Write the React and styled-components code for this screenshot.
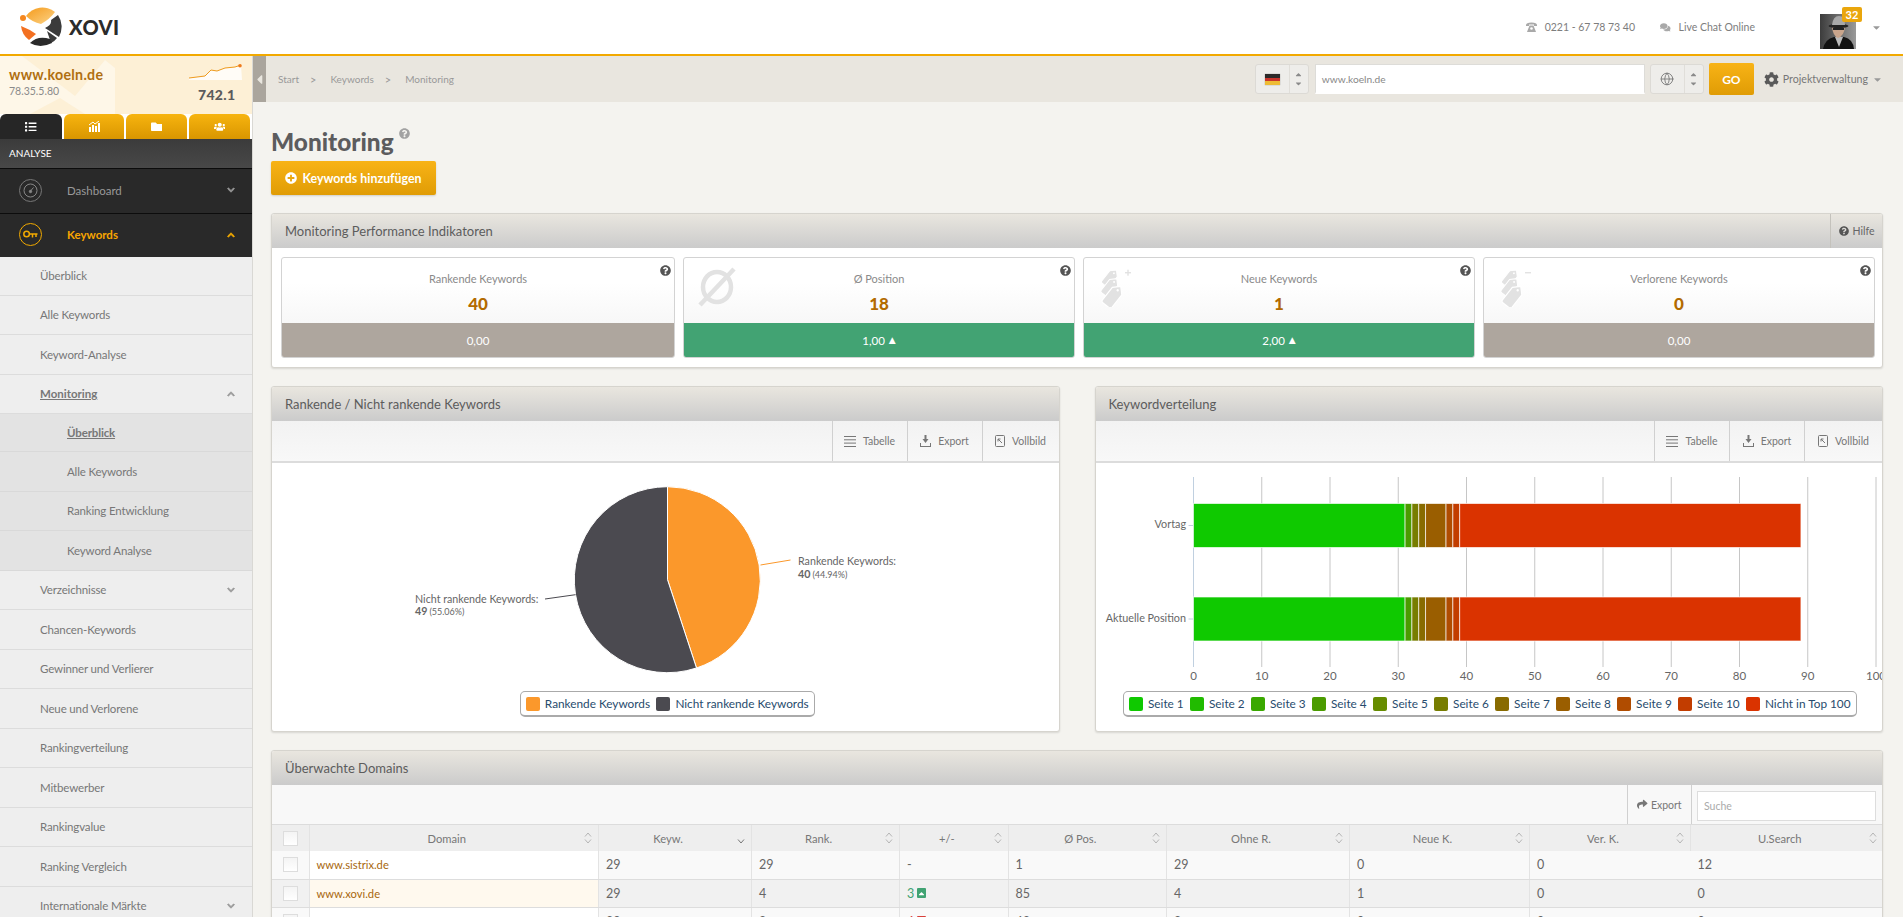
import React from "react";
import styled, { createGlobalStyle } from "styled-components";
import {
  FaList, FaFolder, FaUsers, FaChevronDown, FaChevronUp, FaQuestionCircle, FaPlusCircle,
  FaCog, FaComments, FaShare, FaCaretDown, FaCaretUp, FaCaretLeft,
} from "react-icons/fa";
import { Globe } from "lucide-react";

const FONT = `"Lato", "Noto Sans", "Liberation Sans", sans-serif`;

const Global = createGlobalStyle`
  html, body { margin: 0; padding: 0; height: 100%; overflow: hidden; }
  body { font-family: ${FONT}; background: #f4f3ef; color: #666; }
  * { box-sizing: border-box; }
`;

const Page = styled.div`
  width: 100%;
  height: 100vh;
  overflow: hidden;
  display: flex;
  flex-direction: column;
`;

/* ---------- header ---------- */
const Header = styled.header`
  flex: 0 0 56px;
  display: flex;
  align-items: center;
  background: #fff;
  border-bottom: 2px solid #f2a900;
  padding: 0 21px 0 20px;
`;
const Brand = styled.div`
  display: flex;
  align-items: center;
  gap: 7px;
`;
const BrandName = styled.span`
  font-weight: 900;
  font-size: 20px;
  letter-spacing: 0.4px;
  color: #2b2b2b;
`;
const HeaderRight = styled.div`
  margin-left: auto;
  display: flex;
  align-items: center;
  height: 100%;
`;
const Contact = styled.span`
  display: inline-flex;
  align-items: center;
  gap: 8px;
  font-size: 10.5px;
  color: #7d7d7d;
  margin-right: ${(p) => p.$mr}px;
  svg { color: #a9a9a9; }
`;
const AvatarBox = styled.div`
  position: relative;
  width: 36px;
  height: 35px;
  margin-top: 8px;
  margin-right: 15px;
`;
const Badge = styled.span`
  position: absolute;
  top: -7px;
  right: -6px;
  width: 20px;
  height: 15px;
  border-radius: 2px;
  background: #eaa60c;
  color: #fff;
  font-size: 11px;
  font-weight: 700;
  line-height: 15px;
  text-align: center;
`;
const Caret = styled.span`
  display: inline-flex;
  color: #9a9a9a;
  font-size: 11px;
`;

/* ---------- body ---------- */
const Body = styled.div`
  flex: 1;
  display: flex;
  min-height: 0;
`;
const Sidebar = styled.aside`
  flex: 0 0 253px;
  border-right: 1px solid #d9d8d4;
  background: #eee;
  overflow: hidden;
`;
const Site = styled.div`
  position: relative;
  height: 58px;
  background: #fdf0d6;
  overflow: hidden;
`;
const SiteArt = styled.svg`
  position: absolute;
  left: 0;
  top: 0;
`;
const SiteName = styled.div`
  position: absolute;
  left: 9px;
  top: 10px;
  font-size: 14.2px;
  font-weight: 700;
  letter-spacing: 0.3px;
  color: #b06f10;
`;
const SiteIp = styled.div`
  position: absolute;
  left: 9px;
  top: 29px;
  font-size: 10.5px;
  color: #8a8a8a;
`;
const SiteScore = styled.div`
  position: absolute;
  left: 198px;
  top: 30px;
  font-size: 14px;
  font-weight: 900;
  letter-spacing: 0.3px;
  color: #5b5b5b;
`;
const Spark = styled.svg`
  position: absolute;
  left: 189px;
  top: 8px;
`;
const Tabs = styled.div`
  height: 25px;
  display: grid;
  grid-template-columns: 62px 60px 61px 61px;
  column-gap: 2px;
  background: #fff;
`;
const Tab = styled.div`
  display: flex;
  align-items: center;
  justify-content: center;
  border-radius: 6px 6px 0 0;
  background: ${(p) => (p.$active ? "#262626" : "linear-gradient(#f7b40f,#d99600)")};
  color: #fff;
  font-size: 11.5px;
`;
const SectionLabel = styled.div`
  height: 30px;
  padding: 0 9px 1px;
  display: flex;
  align-items: center;
  background: linear-gradient(#3b3b3b,#484848);
  border-bottom: 1px solid #0c0c0c;
  color: #fff;
  font-size: 10px;
`;
const MainNav = styled.div`
  height: ${(p) => p.$h}px;
  display: flex;
  align-items: center;
  background: #292929;
  border-bottom: ${(p) => (p.$last ? "0" : "1px solid #0c0c0c")};
  color: ${(p) => (p.$active ? "#f8a500" : "#999")};
  font-size: 11.5px;
  font-weight: ${(p) => (p.$active ? 700 : 400)};
  padding: 0 17px 2px 19px;
`;
const NavIcon = styled.span`
  width: 23px;
  height: 23px;
  border-radius: 50%;
  border: 1px solid ${(p) => (p.$active ? "#f2a900" : "#777")};
  display: inline-flex;
  align-items: center;
  justify-content: center;
  margin-right: 25px;
`;
const NavText = styled.span`
  flex: 1;
`;
const SubNav = styled.div`
  height: ${(p) => p.$h || 39.5}px;
  display: flex;
  align-items: center;
  padding: 0 17px 0 ${(p) => (p.$deep ? 67 : 40)}px;
  background: ${(p) => (p.$deep ? "#e3e3e3" : "#eee")};
  border-bottom: 1px solid ${(p) => (p.$deep ? "#d9d9d9" : "#dcdcdc")};
  font-size: 11.5px;
  letter-spacing: -0.15px;
  color: #777;
  font-weight: ${(p) => (p.$current ? 700 : 400)};
  text-decoration: ${(p) => (p.$current ? "underline" : "none")};
`;
const SubGroupTitle = styled.span`
  flex: 1;
  font-weight: 700;
  text-decoration: underline;
  letter-spacing: 0;
`;
const Arrow = styled.span`
  display: inline-flex;
  font-size: 8px;
  color: ${(p) => p.$c || "#999"};
  svg { stroke: currentColor; stroke-width: 50px; }
`;

const Main = styled.main`
  flex: 1;
  min-width: 0;
  display: flex;
  flex-direction: column;
  overflow: hidden;
`;
const TopBar = styled.div`
  flex: 0 0 46px;
  display: flex;
  align-items: center;
  background: #e9e6df;
  padding-right: 20px;
`;
const Toggle = styled.div`
  align-self: stretch;
  width: 13px;
  background: #aaa59d;
  color: #e9e6df;
  display: flex;
  align-items: center;
  justify-content: center;
  font-size: 15px;
`;
const Crumbs = styled.nav`
  display: flex;
  align-items: center;
  margin-left: 12px;
  font-size: 10px;
  color: #999;
`;
const Sep = styled.span`
  margin: 0 14px 0 11px;
  font-size: 11px;
  color: #999;
`;
const Controls = styled.div`
  margin-left: auto;
  display: flex;
  align-items: center;
`;
const Select = styled.div`
  width: ${(p) => p.$w}px;
  height: 30px;
  margin-left: ${(p) => p.$ml || 0}px;
  display: grid;
  grid-template-columns: 1fr 19px;
  align-items: center;
  background: #eeedea;
  border: 1px solid #dcdad5;
  border-radius: 3px;
`;
const SelectIcon = styled.span`
  display: flex;
  justify-content: center;
  color: #777;
`;
const Spin = styled.span`
  height: 100%;
  border-left: 1px solid #e0ded9;
  display: flex;
  flex-direction: column;
  align-items: center;
  justify-content: center;
  color: #8a8a8a;
  font-size: 9px;
  line-height: 6px;
`;
const Flag = styled.span`
  width: 15px;
  height: 11px;
  background: linear-gradient(#2d2a29 0 33%, #c9352c 33% 66%, #eebc35 66%);
  box-shadow: 0 0 1px #888;
`;
const UrlInput = styled.div`
  width: 330px;
  height: 30px;
  margin-left: 6px;
  display: flex;
  align-items: center;
  padding-left: 6px;
  background: #fff;
  border: 1px solid #dddcd8;
  border-bottom: 2px solid #fff;
  font-size: 10.2px;
  color: #888;
`;
const Go = styled.button`
  width: 45px;
  height: 32px;
  margin-left: 5px;
  border: 0;
  border-radius: 2px;
  background: linear-gradient(#f8b316,#e09c05);
  color: #fff;
  font: 700 12px ${FONT};
`;
const Project = styled.div`
  display: flex;
  align-items: center;
  margin-left: 10px;
  gap: 4px;
  font-size: 10.6px;
  color: #777;
`;
const ProjectIcon = styled.span`
  display: inline-flex;
  font-size: 15px;
  color: #5a5a5a;
`;

const Content = styled.div`
  flex: 1;
  padding: 25px 20px 0 18px;
  overflow: hidden;
  background-color: #f4f3ef;
`;
const Title = styled.h1`
  margin: 0;
  display: flex;
  height: 29px;
  align-items: center;
  font-size: 24.4px;
  font-weight: 900;
  color: #5c5c5e;
  line-height: 29px;
`;
const TitleHelp = styled.span`
  align-self: flex-start;
  margin: 1px 0 0 5px;
  color: #a2a2a2;
  font-size: 11px;
  display: inline-flex;
`;
const AddButton = styled.button`
  display: flex;
  align-items: center;
  justify-content: center;
  gap: 5px;
  margin: 5px 0 18px;
  width: 165px;
  height: 34px;
  border: 0;
  border-radius: 2px;
  background: linear-gradient(#f8b316,#e09c05);
  box-shadow: 0 1px 2px rgba(0,0,0,.15);
  color: #fff;
  font: 700 12.4px ${FONT};
  svg { font-size: 12px; }
`;
const Panel = styled.section`
  background: #fff;
  border: 1px solid #d6d4ce;
  border-radius: 3px;
  box-shadow: 0 1px 2px rgba(0,0,0,.12);
  margin-bottom: 18px;
  overflow: hidden;
`;
const PanelHead = styled.div`
  height: 34px;
  display: flex;
  align-items: center;
  padding-left: 13px;
  background: linear-gradient(#e9e6df,#cbcbcb);
  color: #5c5c5c;
  font-size: 13px;
`;
const HelpTab = styled.div`
  margin-left: auto;
  align-self: stretch;
  width: 52px;
  display: flex;
  align-items: center;
  justify-content: center;
  gap: 4px;
  border-left: 1px solid #c4c2bc;
  font-size: 10.5px;
  color: #666;
  svg { font-size: 10px; color: #555; }
`;
const Kpis = styled.div`
  display: grid;
  grid-template-columns: 394px 392px 392px 392px;
  column-gap: 8px;
  padding: 9px 0 9px 9px;
`;
const Kpi = styled.div`
  position: relative;
  height: 101px;
  border: 1px solid #d3d3d3;
  border-radius: 3px;
  overflow: hidden;
  background: linear-gradient(#fff 25%,#f1f1f1);
  display: flex;
  flex-direction: column;
`;
const KpiTop = styled.div`
  flex: 1;
  display: flex;
  flex-direction: column;
  align-items: center;
  padding-top: 14px;
`;
const KpiLabel = styled.div`
  font-size: 11px;
  color: #8a8a8a;
`;
const KpiValue = styled.div`
  margin-top: 8px;
  font-size: 17px;
  font-weight: 900;
  color: #b36b00;
`;
const KpiFoot = styled.div`
  height: 34px;
  display: flex;
  align-items: center;
  justify-content: center;
  gap: 4px;
  color: #fff;
  font-size: 11.5px;
  background: ${(p) => (p.$up ? "#42a373" : "#aea69e")};
`;
const UpMark = styled.span`
  font: 9px "DejaVu Sans", sans-serif;
`;
const KpiHelp = styled.span`
  position: absolute;
  top: 7px;
  right: 3px;
  display: inline-flex;
  color: #555;
  font-size: 11px;
`;
const KpiGhost = styled.svg`
  position: absolute;
  left: 12px;
  top: 9px;
`;
const ChartRow = styled.div`
  display: grid;
  grid-template-columns: 1fr 1fr;
  column-gap: 35px;
`;
const ChartToolbar = styled.div`
  height: 42px;
  display: flex;
  justify-content: flex-end;
  background: linear-gradient(#f2f2f2,#f8f8f8);
  border-bottom: 2px solid #dcdcdc;
`;
const ToolButton = styled.div`
  width: ${(p) => p.$w}px;
  display: flex;
  align-items: center;
  justify-content: center;
  gap: 7px;
  border-left: 1px solid #d0d0d0;
  font-size: 10.5px;
  color: #777;
`;
const ChartBody = styled.div`
  height: 268px;
  display: flex;
  flex-direction: column;
  align-items: center;
`;
const ChartSvg = styled.svg`
  display: block;
  align-self: flex-start;
  flex: 0 0 228px;
  font-family: ${FONT};
`;
const Legend = styled.div`
  height: 26px;
  display: flex;
  align-items: center;
  gap: 6.3px;
  padding: 0 5px;
  border: 1px solid #aaa;
  border-bottom-width: 2px;
  border-radius: 5px;
  background: #fff;
  font-size: 11.8px;
  color: #274b6d;
  margin-left: ${(p) => p.$ml}px;
`;
const LegendItem = styled.span`
  display: inline-flex;
  align-items: center;
  gap: 5px;
  white-space: nowrap;
`;
const Swatch = styled.i`
  width: 14px;
  height: 14px;
  border-radius: 2px;
  background: ${(p) => p.$c};
`;
const TableToolbar = styled.div`
  height: 40px;
  display: flex;
  justify-content: flex-end;
  background: #f8f8f8;
  border-bottom: 1px solid #dcdcdc;
`;
const TableExport = styled.div`
  width: 65px;
  display: flex;
  align-items: center;
  justify-content: center;
  gap: 3px;
  border-left: 1px solid #d0d0d0;
  border-right: 1px solid #d0d0d0;
  font-size: 10.5px;
  color: #777;
`;
const Search = styled.div`
  width: 179px;
  height: 30px;
  margin: 6px 6px 0 5px;
  padding-left: 6px;
  display: flex;
  align-items: center;
  background: #fff;
  border: 1px solid #ddd;
  font-size: 10.5px;
  color: #aaa;
`;
const Table = styled.table`
  width: 100%;
  table-layout: fixed;
  border-collapse: collapse;
`;
const Th = styled.th`
  position: relative;
  height: 26px;
  padding: 0 ${(p) => (p.$box ? 0 : 14)}px 0 0;
  background: #eee;
  border-right: 1px solid #e3e3e3;
  font-size: 11.2px;
  font-weight: 400;
  color: #777;
  text-align: center;
  &:last-child { border-right: 0; }
`;
const SortMark = styled.svg`
  position: absolute;
  right: 6px;
  top: 7px;
`;
const Td = styled.td`
  height: 28px;
  padding: 0 0 0 ${(p) => (p.$flush ? 0 : 7)}px;
  border-right: ${(p) => (p.$noLine ? "0" : "1px solid #e3e3e3")};
  border-bottom: 1px solid #ddd;
  font-size: 12.5px;
  color: #666;
  background: ${(p) => p.$bg};
`;
const Check = styled.span`
  display: block;
  width: 15px;
  height: 15px;
  margin: 0 auto;
  background: linear-gradient(#f4f4f4,#fff);
  border: 1px solid #ddd;
`;
const DomainLink = styled.span`
  font-size: 11.2px;
  color: #a8670d;
`;
const Delta = styled.span`
  display: inline-flex;
  align-items: center;
  gap: 3px;
  color: ${(p) => p.$c};
`;
const DeltaMark = styled.i`
  width: 9px;
  height: 10px;
  border-radius: 1px;
  background: ${(p) => p.$c};
  display: inline-flex;
  align-items: center;
  justify-content: center;
  color: #fff;
  font-size: 9px;
  font-style: normal;
`;

/* ---------- drawings ---------- */
const Logo = () => (
  <svg width="42" height="40" viewBox="0 0 42 40">
    <defs>
      <linearGradient id="lg1" x1="0" y1="0" x2="1" y2="1">
        <stop offset="0" stopColor="#f59a1b" />
        <stop offset="1" stopColor="#fcd488" />
      </linearGradient>
    </defs>
    <path d="M6 9 A20 20 0 0 1 35 5 Q30 12 21 17 Q12 15 6 9Z" fill="url(#lg1)" />
    <circle cx="3" cy="11" r="3" fill="#f5871f" />
    <path d="M1 19 Q9 22 16 27 L9 33 Q2 28 1 19Z" fill="#f37021" />
    <path d="M38 8 A21 21 0 0 1 39 30 L25 21 Q32 18 31 13Z M27 24 L37 31 Q34 35 31 36 Z" fill="#3b3b3b" />
    <path d="M10 36 Q18 28 30 32 L32 36 Q20 42 10 36Z" fill="#2a2a2a" />
  </svg>
);
const Avatar = () => (
  <svg width="36" height="35" viewBox="0 0 36 35">
    <defs>
      <linearGradient id="av" x1="0" y1="0" x2="1" y2="0">
        <stop offset="0" stopColor="#3c3c3c" />
        <stop offset="1" stopColor="#9a9a9a" />
      </linearGradient>
    </defs>
    <rect width="36" height="35" fill="url(#av)" />
    <path d="M3 35 Q5 25 14 23 L24 23 Q33 25 34 35Z" fill="#121212" />
    <path d="M15 23 L19 33 L23 23Z" fill="#bbb" />
    <path d="M12 13 Q13 22 18 24 Q24 22 25 13Z" fill="#c9a58c" />
    <ellipse cx="18.5" cy="12" rx="10" ry="2.2" fill="#222" />
    <path d="M12 11 Q13 2 19 2 Q25 2 25 11Z" fill="#a8a8a8" />
    <rect x="13" y="14" width="11" height="2" fill="#222" />
  </svg>
);
const OldPhone = () => (
  <svg width="11" height="10" viewBox="0 0 11 10" fill="#a9a9a9">
    <path d="M0 3 Q0 .5 5.5 .5 Q11 .5 11 3 L11 4 L8 4 L8 2.5 L3 2.5 L3 4 L0 4Z" />
    <path d="M3.5 3.5 H7.5 L10 10 H1Z" />
    <circle cx="5.5" cy="6.5" r="1.3" fill="#fff" />
  </svg>
);
const KeyGlyph = () => (
  <svg width="15" height="9" viewBox="0 0 15 9" fill="none" stroke="#f2a900" strokeWidth="1.5">
    <circle cx="3.6" cy="4" r="2.8" />
    <path d="M6.5 4 H14.5 M9.5 4 V7.5 M13 4 V7" />
  </svg>
);
const GaugeGlyph = () => (
  <svg width="15" height="15" viewBox="0 0 15 15" fill="none" stroke="#888">
    <circle cx="7.5" cy="7.5" r="6.5" />
    <path d="M7.5 8 L10.5 4.5" />
    <circle cx="7.5" cy="8.5" r="1.2" fill="#888" />
  </svg>
);
const Tag = ({ x, y, s }) => (
  <g transform={`translate(${x} ${y}) rotate(-52) scale(${s})`} fill="#e2e2e2" stroke="#fff" strokeWidth="1.2">
    <path d="M-11 -6 H5 L11 0 L5 6 H-11 Q-13 6 -13 4 V-4 Q-13 -6 -11 -6Z" />
    <circle cx="6" cy="0" r="1.2" fill="#fff" stroke="none" />
  </g>
);
const TagsIcon = ({ sign }) => (
  <KpiGhost width="38" height="40" viewBox="0 0 38 40">
    <Tag x={15} y={10} s={0.8} />
    <Tag x={15} y={19} s={0.85} />
    <Tag x={18} y={28} s={1} />
    <rect x="29" y="5" width="6" height="1.4" fill="#e2e2e2" />
    {sign === "+" && <rect x="31.3" y="2.7" width="1.4" height="6" fill="#e2e2e2" />}
  </KpiGhost>
);
const AvgIcon = () => (
  <KpiGhost width="42" height="40" viewBox="0 0 42 40" fill="none" stroke="#e2e2e2" strokeWidth="4.5">
    <ellipse cx="21" cy="20" rx="14" ry="15" />
    <path d="M4 38 L38 2" />
  </KpiGhost>
);
const TableIcon = () => (
  <svg width="12" height="11" viewBox="0 0 12 11" fill="#777">
    <rect y="0" width="12" height="1" /><rect y="3.3" width="12" height="1" />
    <rect y="6.6" width="12" height="1" /><rect y="10" width="12" height="1" />
  </svg>
);
const ExportIcon = () => (
  <svg width="11" height="12" viewBox="0 0 11 12" fill="#777">
    <path d="M4.5 0h2v4h2L5.5 8 2.5 4h2z" />
    <path d="M0 8h1v3h9V8h1v4H0z" />
  </svg>
);
const FullIcon = () => (
  <svg width="10" height="12" viewBox="0 0 10 12" fill="none" stroke="#777">
    <rect x=".5" y=".5" width="9" height="11" rx="1" />
    <path d="M3 4l4 4M3 4h2.5M3 4v2.5" />
  </svg>
);
const Sort = ({ desc }) => (
  <SortMark width="8" height="12" viewBox="0 0 8 12" fill="none" stroke="#b5b5b5">
    {!desc && <path d="M1 4.5 L4 1 L7 4.5" />}
    <path d="M1 7.5 L4 11 L7 7.5" stroke={desc ? "#777" : "#b5b5b5"} />
  </SortMark>
);

const toolbar = (last) => (
  <ChartToolbar>
    <ToolButton $w={75}><TableIcon />Tabelle</ToolButton>
    <ToolButton $w={75}><ExportIcon />Export</ToolButton>
    <ToolButton $w={last}><FullIcon />Vollbild</ToolButton>
  </ChartToolbar>
);

const PieChart = () => (
  <ChartSvg width="787" height="228" viewBox="0 1 787 228">
    <path d="M395.5 117.7 L395.5 24.7 A93 93 0 0 1 424.5 206 Z" fill="#fb982b" stroke="#fff" />
    <path d="M395.5 117.7 L424.5 206 A93 93 0 1 1 395.5 24.7 Z" fill="#4b4a50" stroke="#fff" />
    <path d="M488.5 103 L518.5 98" stroke="#fb982b" fill="none" />
    <path d="M273 137 L303.5 132.7" stroke="#4b4a50" fill="none" />
    <text x="526" y="103" fontSize="10.7" fill="#666">Rankende Keywords:</text>
    <text x="526" y="116" fontSize="10.7" fill="#666"><tspan fontWeight="700">40</tspan><tspan fontSize="9" dx="2">(44.94%)</tspan></text>
    <text x="143" y="141" fontSize="10.7" fill="#666">Nicht rankende Keywords:</text>
    <text x="143" y="153" fontSize="10.7" fill="#666"><tspan fontWeight="700">49</tspan><tspan fontSize="9" dx="2">(55.06%)</tspan></text>
  </ChartSvg>
);

const seg = [
  [0, 31, "#0fc900"], [31, 1, "#4b9b00"], [32, 1, "#777d00"], [33, 1, "#886b00"],
  [34, 3, "#9a5e00"], [37, 1, "#b04c00"], [38, 1, "#c23d00"], [39, 50, "#da3300"],
];
const X0 = 97.5;
const U = 6.825;
const BarChart = () => (
  <ChartSvg width="787" height="228" viewBox="0 1 787 228">
    {[0, 10, 20, 30, 40, 50, 60, 70, 80, 90, 100].map((v) => (
      <g key={v}>
        <line x1={X0 + v * U} x2={X0 + v * U} y1="15" y2="205" stroke={v === 0 ? "#c0d0e0" : "#c6c6c6"} />
        <text x={X0 + v * U} y="218" fontSize="11.5" fill="#666" textAnchor="middle">{v}</text>
      </g>
    ))}
    {[41.5, 135].map((y) => (
      <g key={y}>
        <line x1={X0 - 5} x2={X0} y1={y + 22} y2={y + 22} stroke="#c0d0e0" />
        {seg.map(([s, w, c]) => (
          <rect key={s} x={X0 + s * U} y={y} width={w * U} height="44" fill={c} stroke="#fff" strokeOpacity=".65" />
        ))}
      </g>
    ))}
    <text x="90" y="66" fontSize="10.8" fill="#666" textAnchor="end">Vortag</text>
    <text x="90" y="160" fontSize="10.8" fill="#666" textAnchor="end">Aktuelle Position</text>
  </ChartSvg>
);

/* ---------- data ---------- */
const subTop = [
  { t: "Überblick", h: 38.5 }, { t: "Alle Keywords" }, { t: "Keyword-Analyse" },
];
const subDeep = [
  { t: "Überblick", current: true, h: 38 }, { t: "Alle Keywords" }, { t: "Ranking Entwicklung" }, { t: "Keyword Analyse" },
];
const subRest = [
  { t: "Verzeichnisse", more: true }, { t: "Chancen-Keywords" }, { t: "Gewinner und Verlierer" }, { t: "Neue und Verlorene" },
  { t: "Rankingverteilung" }, { t: "Mitbewerber" }, { t: "Rankingvalue" }, { t: "Ranking Vergleich" },
  { t: "Internationale Märkte", more: true },
];
const kpis = [
  { label: "Rankende Keywords", value: "40", foot: "0,00" },
  { label: "Ø Position", value: "18", foot: "1,00", up: true, ghost: <AvgIcon /> },
  { label: "Neue Keywords", value: "1", foot: "2,00", up: true, ghost: <TagsIcon sign="+" /> },
  { label: "Verlorene Keywords", value: "0", foot: "0,00", ghost: <TagsIcon sign="-" /> },
];
const cols = [37, 289.5, 153, 148, 108.5, 158.5, 183, 180, 161, 192];
const heads = ["Domain", "Keyw.", "Rank.", "+/-", "Ø Pos.", "Ohne R.", "Neue K.", "Ver. K.", "U.Search"];
const rows = [
  { domain: "www.sistrix.de", vals: ["29", "29", "-", "1", "29", "0", "0", "12"], bg: "#f9f9f9", dbg: "#fff" },
  { domain: "www.xovi.de", vals: ["29", "4", "up", "85", "4", "1", "0", "0"], bg: "#f1f1f1", dbg: "#fff9ee" },
  { domain: "www.seo-united.de", vals: ["29", "8", "down", "43", "8", "0", "0", "0"], bg: "#f9f9f9", dbg: "#fff" },
];
const legendBars = [
  ["Seite 1", "#0fc900"], ["Seite 2", "#21bb00"], ["Seite 3", "#3aa800"], ["Seite 4", "#4b9b00"],
  ["Seite 5", "#668c00"], ["Seite 6", "#777d00"], ["Seite 7", "#886b00"], ["Seite 8", "#9a5e00"],
  ["Seite 9", "#b04c00"], ["Seite 10", "#c23d00"], ["Nicht in Top 100", "#da3300"],
];

const renderVal = (v) => {
  if (v === "up") return <Delta $c="#41a373">3 <DeltaMark $c="#41a373"><FaCaretUp /></DeltaMark></Delta>;
  if (v === "down") return <Delta $c="#d9403a">6 <DeltaMark $c="#d9403a"><FaCaretDown /></DeltaMark></Delta>;
  return v;
};

export default function App() {
  return (
    <Page>
      <Global />
      <Header>
        <Brand><Logo /><BrandName>XOVI</BrandName></Brand>
        <HeaderRight>
          <Contact $mr={25}><OldPhone />0221 - 67 78 73 40</Contact>
          <Contact $mr={65}><FaComments />Live Chat Online</Contact>
          <AvatarBox><Avatar /><Badge>32</Badge></AvatarBox>
          <Caret><FaCaretDown /></Caret>
        </HeaderRight>
      </Header>
      <Body>
        <Sidebar>
          <Site>
            <SiteArt width="252" height="58" viewBox="0 0 252 58" fill="#fef7e8">
              <path d="M0 0 L22 0 L75 40 L105 4 L115 12 L115 58 L85 58 L60 42 L30 58 L0 58Z" />
            </SiteArt>
            <SiteName>www.koeln.de</SiteName>
            <SiteIp>78.35.5.80</SiteIp>
            <Spark width="54" height="18" viewBox="0 0 54 18">
              <path d="M0 14 L8 13 L16 12 L22 6 L28 7 L36 4 L46 3 L52 1 L53 16 L0 16Z" fill="#fff" opacity=".8" />
              <path d="M0 14 L8 13 L16 12 L22 6 L28 7 L36 4 L46 3 L52 1" stroke="#ee9a1c" fill="none" />
              <circle cx="51" cy="1.8" r="1.8" fill="#ee7b1c" />
            </Spark>
            <SiteScore>742.1</SiteScore>
          </Site>
          <Tabs>
            <Tab $active><FaList /></Tab>
            <Tab>
              <svg width="11" height="11" viewBox="0 0 11 11" fill="#fff">
                <rect x="0" y="6" width="2" height="5" /><rect x="3" y="4" width="2" height="7" />
                <rect x="6" y="5" width="2" height="6" /><rect x="9" y="2" width="2" height="9" />
                <path d="M0 4 L4 1 L6 3 L10 0" stroke="#fff" fill="none" />
              </svg>
            </Tab>
            <Tab><FaFolder /></Tab>
            <Tab><FaUsers /></Tab>
          </Tabs>
          <SectionLabel>ANALYSE</SectionLabel>
          <MainNav $h={45}>
            <NavIcon><GaugeGlyph /></NavIcon>
            <NavText>Dashboard</NavText>
            <Arrow><FaChevronDown /></Arrow>
          </MainNav>
          <MainNav $h={43} $active $last>
            <NavIcon $active><KeyGlyph /></NavIcon>
            <NavText>Keywords</NavText>
            <Arrow $c="#f2a900"><FaChevronUp /></Arrow>
          </MainNav>
          {subTop.map((s) => <SubNav key={s.t} $h={s.h}>{s.t}</SubNav>)}
          <SubNav>
            <SubGroupTitle>Monitoring</SubGroupTitle>
            <Arrow><FaChevronUp /></Arrow>
          </SubNav>
          {subDeep.map((s) => <SubNav key={s.t} $deep $current={s.current} $h={s.h}>{s.t}</SubNav>)}
          {subRest.map((s) => (
            <SubNav key={s.t}><NavText>{s.t}</NavText>{s.more && <Arrow><FaChevronDown /></Arrow>}</SubNav>
          ))}
        </Sidebar>
        <Main>
          <TopBar>
            <Toggle><FaCaretLeft /></Toggle>
            <Crumbs>Start<Sep>&gt;</Sep>Keywords<Sep>&gt;</Sep>Monitoring</Crumbs>
            <Controls>
              <Select $w={54}><SelectIcon><Flag /></SelectIcon><Spin><FaCaretUp /><FaCaretDown /></Spin></Select>
              <UrlInput>www.koeln.de</UrlInput>
              <Select $w={54} $ml={5}><SelectIcon><Globe size={14} strokeWidth={1.5} /></SelectIcon><Spin><FaCaretUp /><FaCaretDown /></Spin></Select>
              <Go>GO</Go>
              <Project><ProjectIcon><FaCog /></ProjectIcon>Projektverwaltung<Caret><FaCaretDown /></Caret></Project>
            </Controls>
          </TopBar>
          <Content>
            <Title>Monitoring<TitleHelp><FaQuestionCircle /></TitleHelp></Title>
            <AddButton><FaPlusCircle />Keywords hinzufügen</AddButton>
            <Panel>
              <PanelHead>Monitoring Performance Indikatoren<HelpTab><FaQuestionCircle />Hilfe</HelpTab></PanelHead>
              <Kpis>
                {kpis.map((k) => (
                  <Kpi key={k.label}>
                    {k.ghost}
                    <KpiHelp><FaQuestionCircle /></KpiHelp>
                    <KpiTop><KpiLabel>{k.label}</KpiLabel><KpiValue>{k.value}</KpiValue></KpiTop>
                    <KpiFoot $up={k.up}>{k.foot}{k.up && <UpMark>▲</UpMark>}</KpiFoot>
                  </Kpi>
                ))}
              </Kpis>
            </Panel>
            <ChartRow>
              <Panel>
                <PanelHead>Rankende / Nicht rankende Keywords</PanelHead>
                {toolbar(77)}
                <ChartBody>
                  <PieChart />
                  <Legend $ml={4}>
                    <LegendItem><Swatch $c="#fb982b" />Rankende Keywords</LegendItem>
                    <LegendItem><Swatch $c="#4b4a50" />Nicht rankende Keywords</LegendItem>
                  </Legend>
                </ChartBody>
              </Panel>
              <Panel>
                <PanelHead>Keywordverteilung</PanelHead>
                {toolbar(78)}
                <ChartBody>
                  <BarChart />
                  <Legend $ml={2}>
                    {legendBars.map(([t, c]) => <LegendItem key={t}><Swatch $c={c} />{t}</LegendItem>)}
                  </Legend>
                </ChartBody>
              </Panel>
            </ChartRow>
            <Panel>
              <PanelHead>Überwachte Domains</PanelHead>
              <TableToolbar>
                <TableExport><FaShare />Export</TableExport>
                <Search>Suche</Search>
              </TableToolbar>
              <Table>
                <colgroup>{cols.map((w, i) => <col key={i} style={{ width: w }} />)}</colgroup>
                <thead>
                  <tr>
                    <Th $box><Check /></Th>
                    {heads.map((h, i) => <Th key={h}>{h}<Sort desc={i === 1} /></Th>)}
                  </tr>
                </thead>
                <tbody>
                  {rows.map((r) => (
                    <tr key={r.domain}>
                      <Td $flush $bg={r.bg}><Check /></Td>
                      <Td $bg={r.dbg}><DomainLink>{r.domain}</DomainLink></Td>
                      {r.vals.map((v, i) => <Td key={i} $bg={r.bg} $noLine={i >= 6}>{renderVal(v)}</Td>)}
                    </tr>
                  ))}
                </tbody>
              </Table>
            </Panel>
          </Content>
        </Main>
      </Body>
    </Page>
  );
}
